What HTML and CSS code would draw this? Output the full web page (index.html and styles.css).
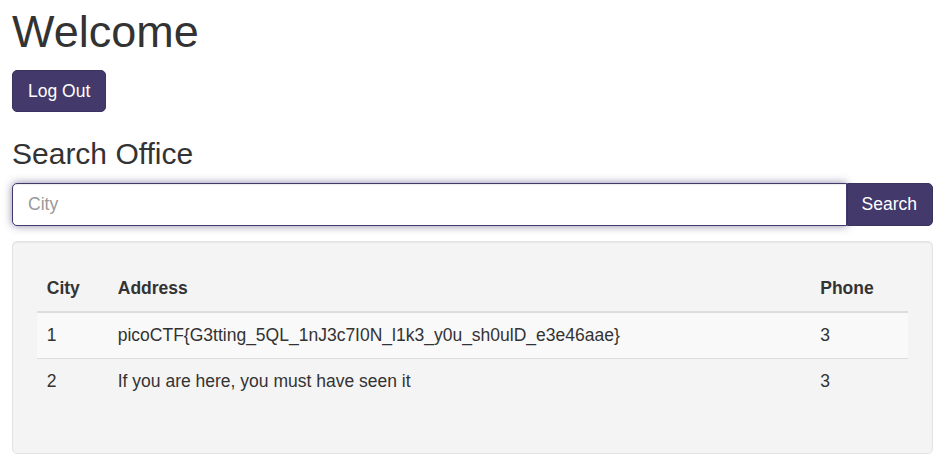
FILE: index.html
```html
<!DOCTYPE html>
<html lang="en">
<head>
<meta charset="utf-8">
<title>Welcome</title>
<link rel="stylesheet" href="styles.css">
</head>
<body>
<div class="container">
  <h1 class="title">Welcome</h1>
  <button class="btn">Log Out</button>
  <h3 class="subtitle">Search Office</h3>
  <form class="input-group">
    <input class="form-control" type="text" placeholder="City">
    <button class="btn btn-addon" type="button">Search</button>
  </form>
  <div class="well">
    <table class="table">
      <thead>
        <tr><th class="c-city">City</th><th class="c-addr">Address</th><th class="c-phone">Phone</th></tr>
      </thead>
      <tbody>
        <tr class="odd"><td>1</td><td>picoCTF{G3tting_5QL_1nJ3c7I0N_l1k3_y0u_sh0ulD_e3e46aae}</td><td>3</td></tr>
        <tr><td>2</td><td>If you are here, you must have seen it</td><td>3</td></tr>
      </tbody>
    </table>
  </div>
</div>
</body>
</html>
```

FILE: styles.css
```css
* { box-sizing: border-box; }
html, body { margin: 0; padding: 0; }
body {
  font-family: "Liberation Sans", Arial, sans-serif;
  font-size: 17.5px;
  line-height: 25px;
  color: #333;
  background: #fff;
}
.container { padding: 7px 14px 0 12px; }
.title {
  margin: 0 0 13.5px;
  font-size: 45px;
  font-weight: 500;
  line-height: 49.5px;
}
.btn {
  display: inline-block;
  font-family: inherit;
  font-size: 17.5px;
  line-height: 25px;
  padding: 7.5px 15px;
  color: #fff;
  background: #433a6b;
  border: 1px solid #3b335f;
  border-radius: 5px;
  cursor: pointer;
}
.subtitle {
  margin: 25px 0 13px;
  font-size: 30px;
  font-weight: 500;
  line-height: 33px;
}
.input-group { display: flex; margin: 0 0 15.5px; }
.form-control {
  flex: 1;
  height: 42.5px;
  padding: 7.5px 15px;
  font-family: inherit;
  font-size: 17.5px;
  color: #555;
  background: #fff;
  border: 1px solid #433a6b;
  border-radius: 5px 0 0 5px;
  box-shadow: inset 0 1px 1px rgba(0,0,0,.075), 0 0 8px rgba(67,58,107,.6);
  outline: none;
}
.form-control::placeholder { color: #999; }
.btn-addon { border-radius: 0 5px 5px 0; padding: 7.5px 15px 7.5px 14px; }
.well {
  min-height: 20px;
  padding: 23.75px;
  background: #f4f4f4;
  border: 1px solid #e3e3e3;
  border-radius: 5px;
  box-shadow: inset 0 1px 1px rgba(0,0,0,.05);
}
.table {
  width: 100%;
  border-collapse: collapse;
  border-spacing: 0;
  margin-bottom: 25px;
}
.table th, .table td {
  padding: 10px;
  text-align: left;
  vertical-align: top;
  line-height: 25px;
}
.table th { font-weight: bold; border-bottom: 2px solid #ddd; vertical-align: bottom; }
.table td { border-top: 1px solid #ddd; }
.table tbody tr:first-child td { border-top: 0; }
.table tr.odd { background: #f9f9f9; }
.c-city { width: 71px; }
.c-phone { width: 98px; }
```
